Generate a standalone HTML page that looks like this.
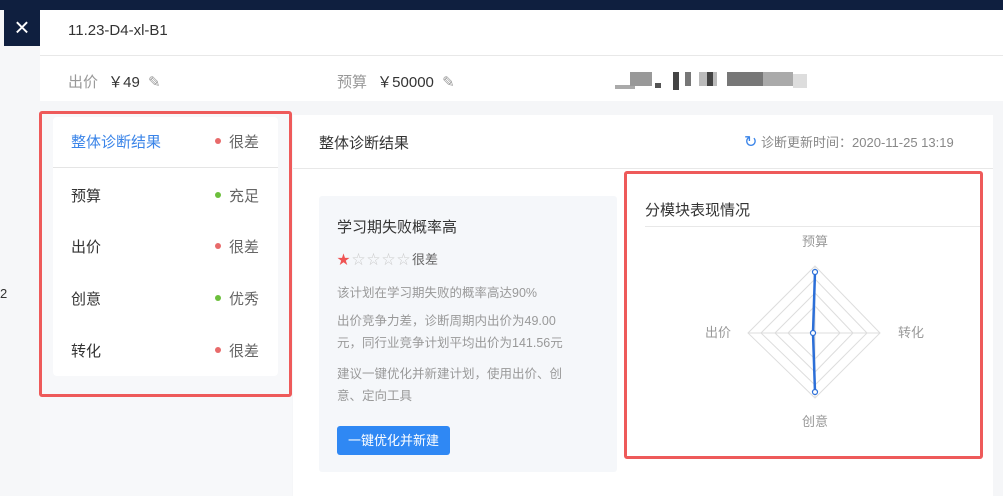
<!DOCTYPE html>
<html><head><meta charset="utf-8"><style>
*{margin:0;padding:0;box-sizing:border-box}
body{width:1003px;height:496px;overflow:hidden;background:#fff;font-family:"Liberation Sans","Noto Sans CJK SC",sans-serif;position:relative}
.a{position:absolute}
.s{position:absolute;left:215px;font-size:15px;color:#666}
.d{display:inline-block;width:6px;height:6px;border-radius:50%;margin-right:8px;vertical-align:3px}
.r{background:#e86a6a}.g{background:#6cbf3c}
</style></head><body>
<div class="a" style="left:0;top:0;width:1003px;height:10px;background:#0f1f3f"></div>
<div class="a" style="left:0;top:10px;width:40px;height:486px;background:#f6f7f9"></div>
<div class="a" style="left:4px;top:10px;width:36px;height:36px;background:#0f1f3f;color:#fff;font-size:26px;line-height:34px;text-align:center">×</div>
<div class="a" style="left:0;top:286px;font-size:13px;color:#333">2</div>
<div class="a" style="left:40px;top:10px;width:963px;height:486px;background:#fff"></div>
<div class="a" style="left:68px;top:22px;font-size:15px;color:#333">11.23-D4-xl-B1</div>
<div class="a" style="left:40px;top:55px;width:963px;height:1px;background:#e8e8e8"></div>
<div class="a" style="left:68px;top:71px;font-size:15px;color:#999">出价 <span style="color:#333;margin-left:6px">￥49</span> <span style="color:#999;margin-left:4px">✎</span></div>
<div class="a" style="left:337px;top:71px;font-size:15px;color:#999">预算 <span style="color:#333;margin-left:6px">￥50000</span> <span style="color:#999;margin-left:4px">✎</span></div>
<div class="a" style="left:615px;top:69px;width:200px;height:20px">
<div class="a" style="left:0;top:16px;width:20px;height:4px;background:#aaa"></div>
<div class="a" style="left:15px;top:3px;width:22px;height:14px;background:#999"></div>
<div class="a" style="left:40px;top:14px;width:6px;height:5px;background:#555"></div>
<div class="a" style="left:58px;top:3px;width:6px;height:18px;background:#444"></div>
<div class="a" style="left:70px;top:3px;width:6px;height:14px;background:#777"></div>
<div class="a" style="left:84px;top:3px;width:18px;height:14px;background:#bbb"></div>
<div class="a" style="left:92px;top:3px;width:6px;height:14px;background:#444"></div>
<div class="a" style="left:112px;top:3px;width:40px;height:14px;background:#777"></div>
<div class="a" style="left:148px;top:3px;width:30px;height:14px;background:#aaa"></div>
<div class="a" style="left:178px;top:5px;width:14px;height:14px;background:#ddd"></div>
</div>
<div class="a" style="left:40px;top:101px;width:963px;height:395px;background:#f5f6f8"></div>
<div class="a" style="left:40px;top:111px;width:252px;height:385px;background:#f7f8fa"></div>
<div class="a" style="left:53px;top:117px;width:225px;height:259px;background:#fff;border-radius:4px"></div>
<div class="a" style="left:53px;top:167px;width:225px;height:1px;background:#e5e5e5"></div>
<div class="a" style="left:71px;top:131px;font-size:15px;color:#3a84e8">整体诊断结果</div>
<div class="a" style="left:71px;top:185px;font-size:15px;color:#333">预算</div>
<div class="a" style="left:71px;top:236px;font-size:15px;color:#333">出价</div>
<div class="a" style="left:71px;top:288px;font-size:15px;color:#333">创意</div>
<div class="a" style="left:71px;top:340px;font-size:15px;color:#333">转化</div>
<div class="s" style="top:131px"><span class="d r"></span>很差</div>
<div class="s" style="top:185px"><span class="d g"></span>充足</div>
<div class="s" style="top:236px"><span class="d r"></span>很差</div>
<div class="s" style="top:288px"><span class="d g"></span>优秀</div>
<div class="s" style="top:340px"><span class="d r"></span>很差</div>
<div class="a" style="left:39px;top:111px;width:253px;height:286px;border:3px solid #ee5a5a;border-radius:3px"></div>
<div class="a" style="left:293px;top:115px;width:700px;height:381px;background:#fff"></div>
<div class="a" style="left:319px;top:132px;font-size:15px;color:#333">整体诊断结果</div>
<div class="a" style="left:293px;top:168px;width:700px;height:1px;background:#e8e8e8"></div>
<div class="a" style="left:744px;top:132px;font-size:13px;color:#888"><span style="color:#3a84e8;font-size:16px">↻</span> 诊断更新时间：2020-11-25 13:19</div>
<div class="a" style="left:319px;top:196px;width:298px;height:276px;background:#f5f7fa;border-radius:3px"></div>
<div class="a" style="left:337px;top:216px;font-size:15px;color:#333">学习期失败概率高</div>
<div class="a" style="left:337px;top:249px;font-size:13px;color:#ccc;letter-spacing:2px"><span style="color:#ef5353">★</span>☆☆☆☆<span style="color:#666;font-size:13px;letter-spacing:0">很差</span></div>
<div class="a" style="left:337px;top:282px;font-size:12.5px;color:#999">该计划在学习期失败的概率高达90%</div>
<div class="a" style="left:337px;top:310px;width:270px;font-size:12.5px;line-height:22px;color:#999;white-space:nowrap">出价竞争力差，诊断周期内出价为49.00<br>元，同行业竞争计划平均出价为141.56元</div>
<div class="a" style="left:337px;top:363px;width:270px;font-size:12.5px;line-height:22px;color:#999;white-space:nowrap">建议一键优化并新建计划，使用出价、创<br>意、定向工具</div>
<div class="a" style="left:337px;top:426px;width:113px;height:29px;background:#2f88f4;border-radius:3px;color:#fff;font-size:13px;line-height:29px;text-align:center">一键优化并新建</div>
<div class="a" style="left:645px;top:199px;font-size:15px;color:#333">分模块表现情况</div>
<div class="a" style="left:645px;top:226px;width:337px;height:1px;background:#e8e8e8"></div>
<svg class="a" style="left:624px;top:171px" width="360" height="288">
<g fill="none" stroke="#ddd" stroke-width="1">
<polygon points="191,95 256,162 191,227 124,162"/>
<polygon points="191,108 243,162 191,214 137,162"/>
<polygon points="191,122 229,162 191,201 151,162"/>
<polygon points="191,135 216,162 191,188 164,162"/>
<line x1="191" y1="95" x2="191" y2="227"/><line x1="124" y1="162" x2="256" y2="162"/>
</g>
<polyline points="191,101 189,162 191,221" fill="none" stroke="#2c6fd8" stroke-width="2.5"/>
<g fill="#fff" stroke="#2c6fd8" stroke-width="1.2"><circle cx="191" cy="101" r="2.5"/><circle cx="191" cy="221" r="2.5"/><circle cx="189" cy="162" r="2.5"/></g>
<g font-size="13" fill="#999" text-anchor="middle" font-family="Liberation Sans,Noto Sans CJK SC,sans-serif">
<text x="191" y="75">预算</text><text x="94" y="166">出价</text><text x="287" y="166">转化</text><text x="191" y="255">创意</text></g>
</svg>
<div class="a" style="left:624px;top:171px;width:359px;height:288px;border:3px solid #ee5a5a;border-radius:3px"></div>
</body></html>
